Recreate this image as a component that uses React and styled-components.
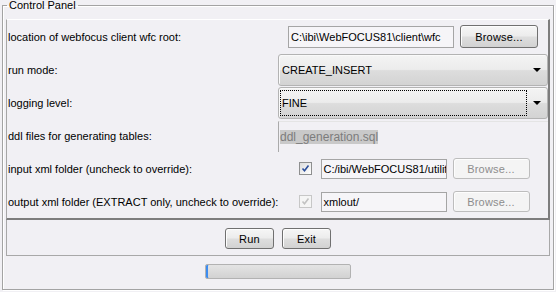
import React from "react";
import styled, { createGlobalStyle } from "styled-components";

const GlobalStyle = createGlobalStyle`
  html, body {
    margin: 0;
    padding: 0;
    background: #f1f0f4;
  }
  body {
    width: 556px;
    height: 292px;
    overflow: hidden;
    font-family: "Liberation Sans", Arial, sans-serif;
    font-size: 11px;
    color: #000;
  }
`;

const Frame = styled.fieldset`
  box-sizing: border-box;
  margin: 0 2px;
  height: 290px;
  padding: 8px 3px 2px 3px;
  border: 1px solid #a3a3a3;
  box-shadow: inset 1px 1px 0 #ffffff, 1px 1px 0 #ffffff;
  min-width: 0;
  display: flex;
  flex-direction: column;
`;

const Title = styled.legend`
  margin-left: 1px;
  padding: 0 2px;
  font-size: 11px;
  line-height: 11px;
`;

const FormPanel = styled.div`
  box-sizing: border-box;
  display: grid;
  grid-template-columns: 271px 1fr;
  grid-auto-rows: 33px;
  border-top: 1px solid #ffffff;
  border-left: 1px solid #a6a6a6;
  border-right: 2px solid #7d7d7d;
  border-bottom: 2px solid #7d7d7d;
`;

const Label = styled.div`
  display: flex;
  align-items: center;
  padding-left: 1px;
  white-space: nowrap;
`;

const Cell = styled.div`
  display: flex;
  align-items: center;
  justify-content: ${(p) => (p.$fill ? "stretch" : "center")};
  gap: ${(p) => p.$gap || 0}px;
  padding-left: ${(p) => p.$shift || 0}px;
`;

const TextField = styled.div`
  box-sizing: border-box;
  width: ${(p) => p.$w}px;
  height: ${(p) => p.$h}px;
  border: 1px solid #a5a5a5;
  background: #f6f5f8;
  padding: 0 2px;
  display: flex;
  align-items: center;
  overflow: hidden;
  white-space: nowrap;
  margin-left: ${(p) => p.$ml || 0}px;
`;

const Button = styled.div`
  box-sizing: border-box;
  width: ${(p) => p.$w}px;
  height: ${(p) => p.$h}px;
  display: flex;
  align-items: center;
  justify-content: center;
  border-radius: 3px;
  border: 1px solid ${(p) => (p.$disabled ? "#bdbdbd" : "#707070")};
  color: ${(p) => (p.$disabled ? "#8d8d8d" : "#000")};
  background: ${(p) =>
    p.$disabled
      ? "#f4f4f4"
      : "linear-gradient(#f6f6f6 0%, #ececec 48%, #dedede 52%, #d2d2d2 100%)"};
  box-shadow: inset 1px 1px 0 #fdfdfd;
  letter-spacing: 0.2px;
`;

const Combo = styled.div`
  box-sizing: border-box;
  flex: 1;
  height: 32px;
  margin-top: ${(p) => p.$mt || 0}px;
  border: 1px solid #b3b3b3;
  border-radius: 3px;
  background: linear-gradient(#f4f4f4 0%, #ececec 48%, #dddddd 52%, #d3d3d3 100%);
  box-shadow: inset 1px 1px 0 #fafafa;
  display: flex;
  align-items: center;
  padding: 2px 6px 2px 1px;
`;

const ComboValue = styled.div`
  box-sizing: border-box;
  flex: 1;
  height: 100%;
  display: flex;
  align-items: center;
  padding-left: 1px;
  border: 1px dotted ${(p) => (p.$focused ? "#000" : "transparent")};
  margin-right: 6px;
`;

const Arrow = styled.div`
  width: 0;
  height: 0;
  border-left: 4px solid transparent;
  border-right: 4px solid transparent;
  border-top: 4px solid #000;
`;

const DdlField = styled.div`
  box-sizing: border-box;
  flex: 1;
  height: 31px;
  margin-top: 2px;
  border-left: 1px solid #aaaaaa;
  border-top: 1px solid #e4e4e4;
  display: flex;
  align-items: center;
  padding-left: 1px;
  font-size: 12px;
`;

const Selected = styled.span`
  background: #c9c9c9;
  color: #7c7c7c;
  line-height: 14px;
`;

const Box = styled.div`
  box-sizing: border-box;
  width: 13px;
  height: 13px;
  border: 1px solid ${(p) => (p.$disabled ? "#c7c7c7" : "#8e8f8f")};
  background: ${(p) =>
    p.$disabled ? "#f5f5f5" : "linear-gradient(135deg, #dcdcdc, #ffffff)"};
  display: flex;
  align-items: center;
  justify-content: center;
`;

const ButtonBar = styled.div`
  box-sizing: border-box;
  height: 36px;
  border: 1px solid #a8a8a8;
  border-top: none;
  display: flex;
  align-items: center;
  justify-content: center;
  gap: 8px;
  padding-top: 2px;
`;

const ProgressArea = styled.div`
  flex: 1;
  display: flex;
  align-items: center;
  justify-content: center;
`;

const Progress = styled.div`
  box-sizing: border-box;
  width: 146px;
  height: 15px;
  border: 1px solid #b2b2b2;
  border-radius: 2px;
  background: linear-gradient(#e4e4e4, #d2d2d2);
  box-shadow: inset 2px 0 0 #3c8cf0;
`;

function Check({ disabled }) {
  return (
    <Box $disabled={disabled}>
      <svg width="9" height="9" viewBox="0 0 9 9">
        <path
          d="M1.5 4.5 L3.5 6.8 L7.5 1.5"
          fill="none"
          stroke={disabled ? "#c2c2c2" : "#2b4d9a"}
          strokeWidth="1.6"
        />
      </svg>
    </Box>
  );
}

export default function App() {
  return (
    <>
      <GlobalStyle />
      <Frame>
        <Title>Control Panel</Title>
        <FormPanel>
          <Label>location of webfocus client wfc root:</Label>
          <Cell $gap={6}>
            <TextField $w={166} $h={22}>C:\ibi\WebFOCUS81\client\wfc</TextField>
            <Button $w={78} $h={23}>Browse...</Button>
          </Cell>

          <Label>run mode:</Label>
          <Cell $fill>
            <Combo>
              <ComboValue>CREATE_INSERT</ComboValue>
              <Arrow />
            </Combo>
          </Cell>

          <Label>logging level:</Label>
          <Cell $fill>
            <Combo $mt={1}>
              <ComboValue $focused>FINE</ComboValue>
              <Arrow />
            </Combo>
          </Cell>

          <Label>ddl files for generating tables:</Label>
          <Cell $fill>
            <DdlField>
              <Selected>ddl_generation.sql</Selected>
            </DdlField>
          </Cell>

          <Label>input xml folder (uncheck to override):</Label>
          <Cell $gap={6} $shift={2}>
            <Check />
            <TextField $w={126} $h={20} $ml={3}>C:/ibi/WebFOCUS81/utilit</TextField>
            <Button $w={77} $h={21} $disabled>Browse...</Button>
          </Cell>

          <Label>output xml folder (EXTRACT only, uncheck to override):</Label>
          <Cell $gap={6} $shift={2}>
            <Check disabled />
            <TextField $w={126} $h={20} $ml={3}>xmlout/</TextField>
            <Button $w={77} $h={21} $disabled>Browse...</Button>
          </Cell>
        </FormPanel>
        <ButtonBar>
          <Button $w={49} $h={21}>Run</Button>
          <Button $w={49} $h={21}>Exit</Button>
        </ButtonBar>
        <ProgressArea>
          <Progress />
        </ProgressArea>
      </Frame>
    </>
  );
}
